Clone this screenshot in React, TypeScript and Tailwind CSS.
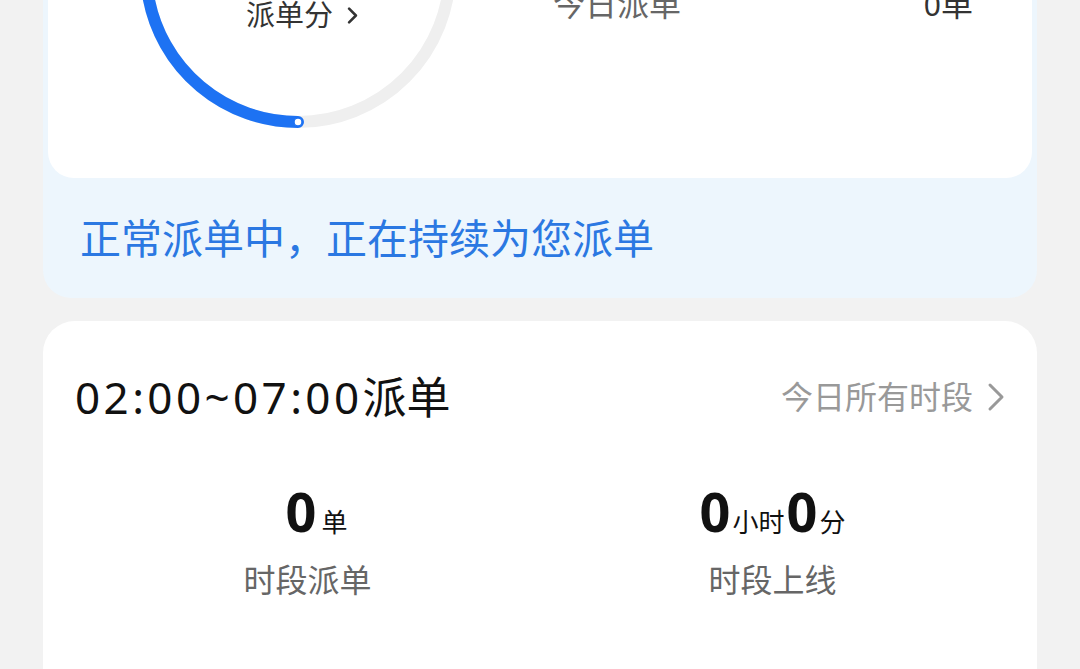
import React from 'react';

const Chevron: React.FC<{ className?: string; color: string; width: number }> = ({ className, color, width }) => (
  <svg className={className} viewBox="0 0 12 20" fill="none">
    <polyline points="2,2 10,10 2,18" stroke={color} strokeWidth={width} strokeLinecap="round" strokeLinejoin="round" />
  </svg>
);

const Gauge: React.FC = () => {
  // ring centre sits above the viewport, only the lower part shows
  const c = 170;
  const r = 152;
  const end = (250 * Math.PI) / 180;
  const ex = c + r * Math.cos(end);
  const ey = c + r * Math.sin(end);

  return (
    <div className="relative ml-[80px] mt-[20px] h-[340px] w-[340px] shrink-0">
      <svg width="340" height="340" viewBox="0 0 340 340">
        <circle cx={c} cy={c} r={r} fill="none" stroke="#efefef" strokeWidth="12" />
        <path
          d={`M ${c} ${c + r} A ${r} ${r} 0 0 1 ${ex} ${ey}`}
          fill="none"
          stroke="#1d72f3"
          strokeWidth="12"
          strokeLinecap="round"
        />
        <circle cx={c} cy={c + r} r="4" fill="#ffffff" stroke="#1d72f3" strokeWidth="1.5" />
      </svg>
      <div className="absolute inset-x-0 top-[110px] text-center text-[64px] font-bold leading-none text-[#111]">100</div>
      <div className="absolute inset-x-0 top-[198px] flex items-center justify-center gap-[14px] pl-[8px] text-[29px] leading-[34px] text-[#333]">
        <span>派单分</span>
        <Chevron className="h-[17px] w-[11px]" color="#333" width={3} />
      </div>
    </div>
  );
};

export default function App() {
  return (
    <div className="h-[669px] overflow-hidden bg-[#f2f2f2] font-['Noto_Sans','Noto_Sans_CJK_SC',sans-serif]">
      {/* status card, top part scrolled off */}
      <div className="mx-[43px] -mt-[220px] rounded-[28px] bg-[#edf6fd] px-[5px]">
        <div className="flex h-[398px] rounded-[26px] bg-white">
          <Gauge />
          <div className="ml-[85px] flex flex-1 flex-col gap-[48px] pr-[59px] pt-[128px]">
            <div className="flex h-[32px] items-center justify-between text-[32px] leading-[32px]">
              <span className="text-[#666]">今日上线</span>
              <span className="text-[#333]">0小时</span>
            </div>
            <div className="flex h-[32px] items-center justify-between text-[32px] leading-[32px]">
              <span className="text-[#666]">今日派单</span>
              <span className="text-[#333]">
                <span className="text-[30px]">0</span>单
              </span>
            </div>
          </div>
        </div>
        <div className="flex h-[120px] items-center pl-[32px] text-[41px] leading-none text-[#2b78e2]">
          正常派单中，正在持续为您派单
        </div>
      </div>

      {/* time slot card */}
      <div className="mx-[43px] mt-[23px] h-[400px] rounded-[32px] bg-white px-[32px] pt-[54px]">
        <div className="flex h-[44px] items-center justify-between">
          <span className="text-[44px] leading-[44px] text-[#111]">
            <span className="tracking-[3.4px]">02:00~07:00</span>派单
          </span>
          <span className="flex items-center gap-[14px] text-[32px] leading-[32px] text-[#999]">
            今日所有时段
            <Chevron className="h-[30px] w-[18px]" color="#999" width={2} />
          </span>
        </div>
        <div className="mt-[65px] grid grid-cols-2">
          <div className="flex flex-col items-center">
            <div className="flex h-[54px] items-baseline pl-[18px] leading-[54px] text-[#111]">
              <span className="text-[54px] font-bold">0</span>
              <span className="ml-[5px] text-[26px]">单</span>
            </div>
            <div className="mt-[26px] text-[32px] leading-[32px] text-[#666]">时段派单</div>
          </div>
          <div className="flex flex-col items-center">
            <div className="flex h-[54px] items-baseline leading-[54px] text-[#111]">
              <span className="text-[54px] font-bold">0</span>
              <span className="ml-[2px] text-[26px]">小时</span>
              <span className="ml-[2px] text-[54px] font-bold">0</span>
              <span className="ml-[2px] text-[26px]">分</span>
            </div>
            <div className="mt-[26px] text-[32px] leading-[32px] text-[#666]">时段上线</div>
          </div>
        </div>
      </div>
    </div>
  );
}
